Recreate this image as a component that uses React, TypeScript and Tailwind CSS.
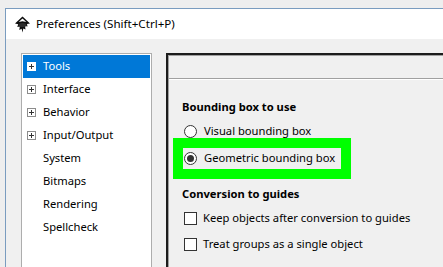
import React from "react";

const font = { fontFamily: '"Noto Sans", "Open Sans", sans-serif' };

const treeItems = [
  { label: "Tools", expander: true, selected: true },
  { label: "Interface", expander: true },
  { label: "Behavior", expander: true },
  { label: "Input/Output", expander: true },
  { label: "System" },
  { label: "Bitmaps" },
  { label: "Rendering" },
  { label: "Spellcheck" },
];

function InkscapeIcon() {
  return (
    <svg width="17" height="17" viewBox="0 0 17 17">
      <path d="M8.5 0.5 L16 7.5 L13 8 L13.5 10.5 L11 10 L11.5 13.5 L9.3 12.5 L8.5 16.5 L7.6 12.8 L5.3 14 L5.8 10.5 L3.3 11 L4.2 8.3 L1 7.5 Z" fill="#0d0d0d" />
      <path d="M8.5 2.5 L12.3 6 L8.5 5.2 L4.7 6 Z" fill="#fff" />
      <ellipse cx="8.5" cy="9" rx="4" ry="2" fill="#2a2a2a" />
    </svg>
  );
}

function Expander({ selected }: { selected?: boolean }) {
  return (
    <div
      className={`w-[9px] h-[9px] border flex items-center justify-center relative ${
        selected ? "border-white bg-white" : "border-[#8c8c8c] bg-white"
      }`}
    >
      <div className="absolute w-[5px] h-px bg-[#333]" />
      <div className="absolute w-px h-[5px] bg-[#333]" />
    </div>
  );
}

function Radio({ checked }: { checked?: boolean }) {
  return (
    <div className="w-[13px] h-[13px] shrink-0 rounded-full border border-[#333] bg-white flex items-center justify-center">
      {checked && <div className="w-[7px] h-[7px] rounded-full bg-[#333]" />}
    </div>
  );
}

function Checkbox() {
  return <div className="w-[13px] h-[13px] shrink-0 border border-[#333] bg-white" />;
}

export default function App() {
  return (
    <div className="w-[443px] h-[267px] overflow-hidden bg-[#eeeeee] pl-[5px] pt-[8px] text-[11.2px] text-black whitespace-nowrap" style={font}>
      <div className="w-full h-full border-l border-t border-[#7a9cbf] flex flex-col">
        {/* title bar */}
        <div className="h-[30px] bg-white flex items-center pl-[8px] gap-[5px] shrink-0">
          <InkscapeIcon />
          <span className="text-[11.6px]">Preferences (Shift+Ctrl+P)</span>
        </div>

        {/* body */}
        <div className="flex-1 bg-[#f0f0f0] flex pl-[15px] pt-[14px] gap-[14px]">
          {/* tree */}
          <div className="w-[131px] h-[300px] bg-white border border-[#adadad] pt-px px-px shrink-0">
            {treeItems.map((item) => (
              <div
                key={item.label}
                className={`h-[23px] flex items-center ${item.selected ? "bg-[#0078d7] text-white" : ""}`}
              >
                <div className="w-[20px] pl-[4px] flex items-center">
                  {item.expander && <Expander selected={item.selected} />}
                </div>
                <span>{item.label}</span>
              </div>
            ))}
          </div>

          {/* panel */}
          <div className="flex-1 h-[300px] border-l-2 border-t-2 border-[#1c1c1c]">
            <div className="h-full border-l border-t border-[#a0a0a0]">
              <div className="h-[22px]" />
              <div className="border-t border-[#a0a0a0]" />
              <div className="border-t border-white" />

              <div className="pl-[13px] pt-[19px]">
                <div className="h-[16px] flex items-center font-bold">Bounding box to use</div>
                <div className="h-[20px] mt-[6px] flex items-center gap-[7px] pl-[2px]">
                  <Radio />
                  <span>Visual bounding box</span>
                </div>

                {/* highlighted option */}
                <div className="-ml-[9px] mt-[-3px] w-[178px] h-[41px] bg-[#00ff00] p-[10px]">
                  <div className="h-full bg-[#f0f0f0] flex items-center gap-[7px] pl-[1px]">
                    <Radio checked />
                    <span>Geometric bounding box</span>
                  </div>
                </div>

                <div className="h-[16px] mt-[7px] flex items-center font-bold">Conversion to guides</div>
                <div className="h-[20px] mt-[6px] flex items-center gap-[6px] pl-[2px]">
                  <Checkbox />
                  <span>Keep objects after conversion to guides</span>
                </div>
                <div className="h-[20px] mt-[6px] flex items-center gap-[6px] pl-[2px]">
                  <Checkbox />
                  <span>Treat groups as a single object</span>
                </div>
              </div>
            </div>
          </div>
        </div>
      </div>
    </div>
  );
}
